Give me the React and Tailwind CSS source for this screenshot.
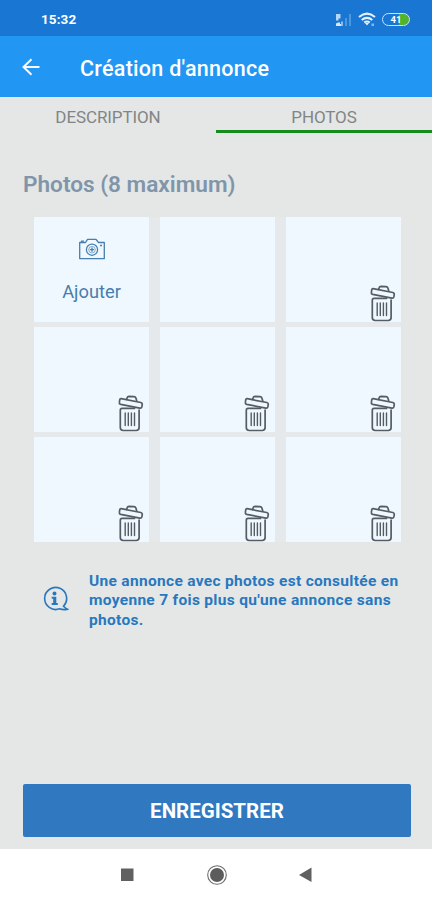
import React from 'react';

const photoSlots = [
  { id: 1, type: 'add' },
  { id: 2, type: 'empty' },
  { id: 3, type: 'photo' },
  { id: 4, type: 'photo' },
  { id: 5, type: 'photo' },
  { id: 6, type: 'photo' },
  { id: 7, type: 'photo' },
  { id: 8, type: 'photo' },
  { id: 9, type: 'photo' },
];

function TrashIcon() {
  return (
    <svg width="26" height="37" viewBox="0 0 26 37" fill="none" stroke="#555c63" strokeWidth="1.7" strokeLinejoin="round" strokeLinecap="round" aria-hidden="true">
      <path d="M8.5 4.4 9.2 2.6Q9.6 1.5 11 1.4L16 1.6Q17.4 1.8 17.9 3L18.7 5.8" />
      <path d="M3.2 3.7 22.8 7.5Q24.6 8 24.2 9.8L23.8 12Q23.4 13.4 21.8 13.1L2.8 9.4Q1.1 9 1.4 7.4L1.7 5Q2 3.5 3.2 3.7Z" />
      <path d="M16.5 13.4H4Q2.3 13.4 2.3 15.3V32.6Q2.3 35.5 5.2 35.5H18.2Q21.1 35.5 21.1 32.6V15" />
      <path d="M7.2 18V30.5M10.3 18V30.5M13.4 18V30.5M16.5 18V30.5" strokeWidth="1.4" />
    </svg>
  );
}

function CameraIcon() {
  return (
    <svg width="28" height="22" viewBox="0 0 28 22" fill="none" stroke="#477eae" strokeWidth="1.3" strokeLinejoin="round" aria-hidden="true">
      <path d="M1.7 4.5H7.5L9.5 1.3H18L20.5 4.5H26.3V20.7H1.7Z" />
      <path d="M3.5 4.3V3.2H6M22 7.5H24" />
      <circle cx="14" cy="11.7" r="5.6" />
      <circle cx="14" cy="11.7" r="3.3" strokeWidth=".6" />
      <path d="M14 9.6V13.8M11.9 11.7H16.1" />
    </svg>
  );
}

function StatusBar() {
  return (
    <div className="flex h-9 shrink-0 items-center justify-between bg-[#1976d2] pt-[3px] pr-[22px] pl-[41px] text-white">
      <span className="text-[13.5px] font-bold tracking-[0.1px]">15:32</span>
      <div className="flex items-center gap-[6px]">
        <svg width="17" height="14" viewBox="0 0 17 14" aria-hidden="true">
          <path d="M1 1H5.5V5.5H3.5V7.5H1Z" fill="#b5d6f7" />
          <path d="M1 13V10.5L3 9.5H5V11H7.5V13Z" fill="#d6eaff" />
          <path d="M6 8.5H8V13H6Z" fill="#8cbdee" />
          <path d="M10 5H12V13H10ZM14 1H16V13H14Z" fill="#4c98df" />
        </svg>
        <svg width="18" height="15" viewBox="0 0 18 15" fill="none" stroke="#e4f1ff" strokeWidth="2" aria-hidden="true">
          <path d="M1 5Q9-1.7 17 5M3.7 8Q9 3.7 14.3 8M6.2 10.6Q9 8.3 11.8 10.6" />
          <path d="M7 11H11L9 13.6Z" fill="#e4f1ff" stroke="none" />
          <path d="M13.5 11.5H16V14H13.5Z" fill="#83bbef" stroke="none" />
        </svg>
        <div className="flex h-[13px] w-7 overflow-hidden rounded-full border-[1.5px] border-[#c5e2fa] bg-linear-to-r from-[#1976d2] from-62% to-[#50b52d] to-62%">
          <span className="w-full text-center text-[9.5px] leading-[11px] font-bold">41</span>
        </div>
      </div>
    </div>
  );
}

function Header() {
  return (
    <header className="flex h-[61px] shrink-0 items-center bg-[#2196f3] pt-[3px] pl-[21px] text-white">
      <button type="button" aria-label="Retour" className="mb-[3px] w-[59px]">
        <svg width="20" height="20" viewBox="0 0 20 20" fill="none" stroke="#f3f9ff" strokeWidth="2" aria-hidden="true">
          <path d="M10.5 2.2 2.5 10 10.5 17.8M2.2 10H18.5" />
        </svg>
      </button>
      <h1 className="pt-[2px] text-[21.5px] font-medium tracking-[0.28px]">Création d'annonce</h1>
    </header>
  );
}

function Tabs() {
  return (
    <nav className="grid h-9 shrink-0 grid-cols-2 text-center text-[17px] leading-[40px] tracking-[-0.1px] text-[#828585]">
      <button type="button" className="h-9">DESCRIPTION</button>
      <button type="button" className="h-9 border-b-[3px] border-[#168c1d]">PHOTOS</button>
    </nav>
  );
}

function PhotoSlot({ type }) {
  if (type === 'add') {
    return (
      <button type="button" className="flex flex-col items-center bg-[#eff7ff] pt-[21px] text-[#477eae]">
        <CameraIcon />
        <span className="mt-[20px] text-[18.3px] leading-6">Ajouter</span>
      </button>
    );
  }

  return (
    <div className="flex items-end justify-end bg-[#eff7ff] pr-[5px]">
      {type === 'photo' && (
        <button type="button" aria-label="Supprimer">
          <TrashIcon />
        </button>
      )}
    </div>
  );
}

function NavigationBar() {
  return (
    <div className="grid h-[51px] shrink-0 grid-cols-[20px_20px_20px] items-center justify-start gap-[69px] bg-white pl-[118px]">
      <svg width="20" height="22" viewBox="0 0 20 22" aria-hidden="true">
        <path d="M3 4.5H15.5V17H3Z" fill="#606060" />
      </svg>
      <svg width="22" height="22" viewBox="0 0 22 22" aria-hidden="true">
        <circle cx="10" cy="11" r="9.3" fill="none" stroke="#6c6c6c" strokeWidth="1.1" />
        <circle cx="10" cy="11" r="7" fill="#5c5c5c" />
      </svg>
      <svg width="20" height="22" viewBox="0 0 20 22" aria-hidden="true">
        <path d="M15.5 3.5V18L3 11Z" fill="#606060" />
      </svg>
    </div>
  );
}

export default function App() {
  return (
    <div className="flex h-[900px] w-[432px] flex-col overflow-hidden bg-[#e4e7e6] font-['Roboto',sans-serif]">
      <StatusBar />
      <Header />
      <Tabs />
      <main className="flex flex-1 flex-col pt-[37px] pr-[21px] pl-[23px]">
        <h2 className="text-[22.6px] leading-[30px] font-semibold text-[#8095a9]">Photos (8 maximum)</h2>
        <div className="mt-[17px] ml-[11px] grid w-[367px] grid-cols-3 grid-rows-[105px_105px_105px] gap-x-[11px] gap-y-[5px] bg-[#e5e9eb]">
          {photoSlots.map((slot) => (
            <PhotoSlot key={slot.id} type={slot.type} />
          ))}
        </div>
        <div className="mt-[30px] flex pl-[19px] text-[#2878bf]">
          <svg className="mt-[14px] mr-[20px] shrink-0" width="27" height="27" viewBox="0 0 27 27" fill="none" stroke="currentColor" strokeWidth="1.6" aria-hidden="true">
            <path d="M21.5 20.2A11 11 0 1 0 17.5 22.8Q21.8 24.3 25.5 23.2Q23.6 22.5 21.5 20.2Z" />
            <circle cx="12.5" cy="7.5" r="2" fill="currentColor" stroke="none" />
            <path d="M9.7 10.8H14.3V17H15.8V18.9H9.7V17H11.2V12.7H9.7Z" fill="currentColor" stroke="none" />
          </svg>
          <p className="text-[15.5px] leading-[19.4px] font-bold tracking-[0.31px] whitespace-nowrap">
            Une annonce avec photos est consultée en<br />
            moyenne 7 fois plus qu'une annonce sans<br />
            photos.
          </p>
        </div>
        <button type="button" className="mt-auto mb-[12px] h-[53px] rounded-[2px] bg-[#3079c1] pt-[2px] text-[20.5px] font-bold text-white">
          ENREGISTRER
        </button>
      </main>
      <NavigationBar />
    </div>
  );
}
